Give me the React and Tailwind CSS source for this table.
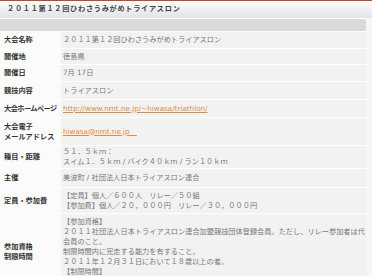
import React from "react";

const FONT = { fontFamily: '"DejaVu Sans", "Noto Sans CJK JP", sans-serif' };

function Row({ label, children, h, labelClass = "" }) {
  return (
    <div className={`grid grid-cols-[61px_1fr] border-t border-white ${h}`}>
      <div className={`bg-[#fbfbfb] flex items-center pl-[4px] font-bold text-[#333] leading-[10px] whitespace-nowrap ${labelClass}`}>
        <div>{label}</div>
      </div>
      <div className="bg-[#f2f2f2] flex flex-col justify-center pl-[2px] text-[#777] leading-[10px] whitespace-nowrap overflow-hidden">
        {children}
      </div>
    </div>
  );
}

export default function App() {
  return (
    <div
      className="w-[372px] h-[276px] overflow-hidden bg-[#f6f6f6] text-[7.2px]"
      style={FONT}
    >
      <div className="h-[1px] bg-[#c4452a]" />
      <div className="h-[17px] flex items-center pl-[7px] font-bold text-[#444] tracking-[0.7px] bg-gradient-to-b from-[#fffdf8] to-[#e2e2ec]">
        ２０１１第１２回ひわさうみがめトライアスロン
      </div>
      <div className="w-[366px]">
        <div className="h-[1px] bg-white" />
        <div className="h-[12px] bg-[#dadada]" />
        <Row label="大会名称" h="h-[17px]">
          <div>２０１１第１２回ひわさうみがめトライアスロン</div>
        </Row>
        <Row label="開催地" h="h-[16px]">
          <div>徳島県</div>
        </Row>
        <Row label="開催日" h="h-[17px]">
          <div>7月 17日</div>
        </Row>
        <Row label="競技内容" h="h-[18px]">
          <div>トライアスロン</div>
        </Row>
        <Row label="大会ホームページ" h="h-[18px]" labelClass="tracking-[-0.55px]">
          <div>
            <span className="text-[#e08a3a] underline">http://www.nmt.ne.jp/~hiwasa/triathlon/</span>
          </div>
        </Row>
        <Row
          label={
            <>
              大会電子
              <br />
              メールアドレス
            </>
          }
          h="h-[28px]"
        >
          <div>
            <span className="text-[#e08a3a] underline">hiwasa@nmt.ne.jp　</span>
          </div>
        </Row>
        <Row label="種目・距離" h="h-[23px]">
          <div>５１．５ｋｍ：</div>
          <div>スイム１．５ｋｍ / バイク４０ｋｍ / ラン１０ｋｍ</div>
        </Row>
        <Row label="主催" h="h-[19px]">
          <div>美波町 / 社団法人日本トライアスロン連合</div>
        </Row>
        <Row label="定員・参加費" h="h-[26px]">
          <div>【定員】個人／６００人　リレー／５０組</div>
          <div>【参加費】個人／２０，０００円　リレー／３０，０００円</div>
        </Row>
        <div className="grid grid-cols-[61px_1fr] border-t border-white h-[77px]">
          <div className="bg-[#fbfbfb] flex items-center pl-[4px] font-bold text-[#333] leading-[10px] whitespace-nowrap">
            <div>
              参加資格
              <br />
              制限時間
            </div>
          </div>
          <div className="bg-[#f2f2f2] pl-[2px] pt-[3px] text-[#777] leading-[10px] whitespace-nowrap overflow-hidden">
            <div>【参加資格】</div>
            <div>２０１１社団法人日本トライアスロン連合加盟競技団体登録会員。ただし、リレー参加者は代</div>
            <div>会員のこと。</div>
            <div>制限時間内に完走する能力を有すること。</div>
            <div>２０１１年１２月３１日において１８歳以上の者。</div>
            <div>【制限時間】</div>
            <div>３時間３０分</div>
          </div>
        </div>
      </div>
    </div>
  );
}
